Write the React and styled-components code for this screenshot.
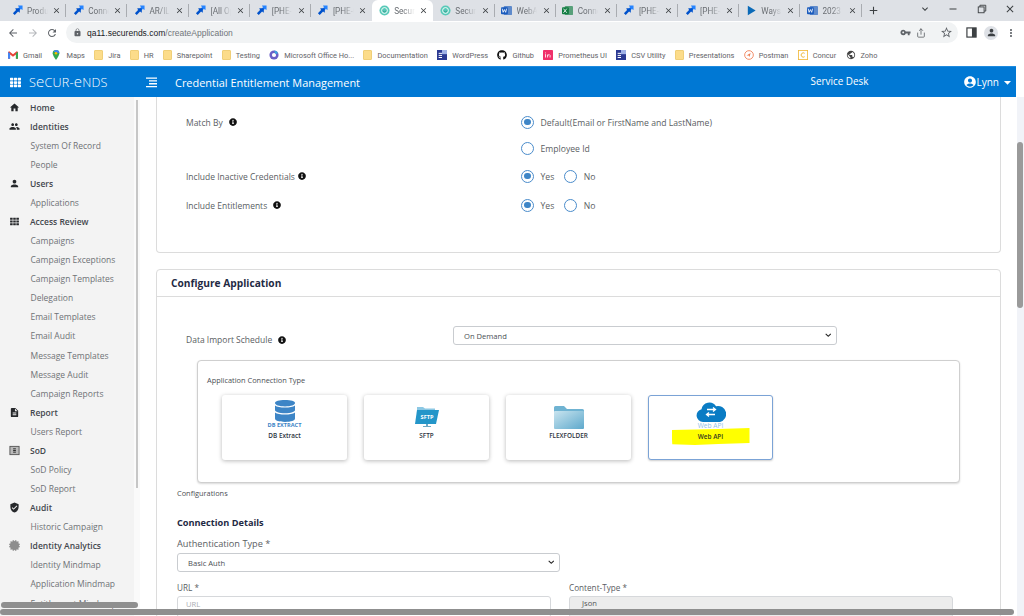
import React from "react";
import styled, { createGlobalStyle } from "styled-components";
import {
  MdArrowBack, MdArrowForward, MdRefresh, MdLock, MdVpnKey, MdStarBorder, MdMoreVert, MdClose, MdAdd,
  MdExpandMore, MdRemove, MdPerson, MdHome, MdPeople, MdDescription, MdVerifiedUser, MdPublic, MdArrowDropDown, MdAccountCircle,
} from "react-icons/md";
import { FaTh, FaInfoCircle, FaGithub, FaCertificate, FaChevronDown } from "react-icons/fa";
import { Share } from "lucide-react";

const Global = createGlobalStyle`
  html, body { margin: 0; padding: 0; background: #fff; overflow: hidden; }
  * { box-sizing: border-box; }
  body { font-family: "Open Sans", "Liberation Sans", sans-serif; }
`;

const Frame = styled.div`
  position: relative; width: 1024px; height: 616px; overflow: hidden;
  display: flex; flex-direction: column; background: #fff;
`;

/* Browser tab strip */
const TabStrip = styled.div`
  height: 21px; flex: none; background: #dee1e6; display: flex; align-items: stretch; padding-left: 5px;
  font-family: Roboto, "Liberation Sans", Arial, sans-serif;
`;
const Tab = styled.div`
  width: 61.2px; flex: none; display: flex; align-items: center; padding: 0 5px 0 6.5px; gap: 4.5px; position: relative;
  background: ${p => (p.$active ? "#fff" : "transparent")};
  border-radius: 6px 6px 0 0;
  color: #6a6e73; font-size: 8.2px;
  &::after {
    content: ""; display: ${p => (p.$sep ? "block" : "none")};
    position: absolute; right: 0; top: 4px; bottom: 4px; width: 1px; background: #a9acb1;
  }
`;
const TabGroup = styled.div`
  display: flex; align-items: stretch; height: 21px;
`;
const TabInner = styled.span`
  flex: 1; white-space: nowrap; min-width: 0;
  -webkit-mask-image: linear-gradient(to right, #000 45%, transparent 100%);
  mask-image: linear-gradient(to right, #000 45%, transparent 100%);
`;
const TabClose = styled(MdClose)`
  width: 9px; height: 9px; color: #3c4043; flex: none;
`;
const NewTab = styled(MdAdd)`
  width: 13px; height: 13px; color: #3c4043; margin: 4px 0 0 5px; flex: none;
`;
const WindowControls = styled.div`
  margin-left: auto; display: flex; align-items: center; height: 18px; color: #3c4043;
`;
const WindowBtn = styled.span`
  width: 28.3px; display: flex; justify-content: center; align-items: center;
  svg { width: ${p => p.$s || 11}px; height: ${p => p.$s || 11}px; }
`;

/* Address row */
const AddressRow = styled.div`
  height: 23px; flex: none; background: #fff; display: flex; align-items: center; color: #5f6368;
`;
const NavBtns = styled.div`
  width: 66px; flex: none; display: flex; align-items: center; padding-left: 7px; gap: 7.5px;
  svg { width: 12px; height: 12px; }
`;
const Pill = styled.div`
  width: 892px; height: 21px; border-radius: 11px; background: #f1f3f4; display: flex; align-items: center;
  padding: 0 5px 0 7px; font-family: "Liberation Sans", Arial, sans-serif; font-size: 8.5px;
`;
const LockGlyph = styled(MdLock)`width: 9px; height: 9px; margin-right: 5px; color: #5f6368;`;
const UrlHost = styled.span`color: #202124;`;
const UrlPath = styled.span`color: #70757a;`;
const PillEnd = styled.div`
  margin-left: auto; display: flex; align-items: center; gap: 5px; color: #5f6368;
`;
const StarGlyph = styled(MdStarBorder)`width: 13px; height: 13px; margin-left: 9px;`;
const RightTools = styled.div`
  flex: 1; display: flex; align-items: center; justify-content: space-between; padding: 0 7px 0 8px; color: #5f6368;
`;
const AvatarDot = styled.span`
  width: 14px; height: 14px; border-radius: 50%; background: #dee1e6; display: flex; align-items: center; justify-content: center; color: #3c4043;
`;

/* Bookmarks */
const BookmarksBar = styled.div`
  height: 22px; flex: none; background: #fff; display: flex; align-items: center; padding-left: 8px;
  font-family: Roboto, "Liberation Sans", Arial, sans-serif; font-size: 7.4px; color: #5f6368; gap: 9.3px;
`;
const Bookmark = styled.span`
  display: inline-flex; align-items: center; gap: 5px; white-space: nowrap;
  svg { width: 10px; height: 10px; flex: none; }
`;
const FolderGlyph = styled.i`
  display: block; width: 9px; height: 10px; background: #fcdc8a; border: 1px solid #f0cf78; border-radius: 1px; flex: none;
`;

/* App header */
const AppHeader = styled.header`
  height: 31px; flex: none; width: 1016px; background: #0078d4; color: #fff; display: flex; align-items: center;
  padding-left: 10px; border-top: 1px solid #1d8be0;
`;
const AppGrid = styled(FaTh)`width: 11px; height: 11px; flex: none;`;
const Logo = styled.div`
  width: 117px; margin-left: 8px; flex: none; font-weight: 300; font-size: 12.6px; letter-spacing: 0.2px; white-space: nowrap; line-height: 1;
  b { font-weight: 300; font-size: 15px; }
`;
const Burger = styled.svg`width: 11px; height: 11px; flex: none; fill: #fff;`;
const AppTitle = styled.div`
  margin-left: 18px; font-size: 10.95px; white-space: nowrap; width: 636px; font-weight: 400;
`;
const ServiceDesk = styled.div`
  width: 152px; font-size: 9.9px; white-space: nowrap; margin-top: -3px;
`;
const UserMenu = styled.div`
  display: flex; align-items: center; font-size: 10px; white-space: nowrap;
  svg:first-child { width: 14px; height: 14px; }
  svg:last-child { width: 17px; height: 17px; }
`;

/* Body */
const Body = styled.div`
  flex: 1; min-height: 0; display: flex; overflow: hidden;
`;
const Sidebar = styled.nav`
  width: 140px; flex: none; height: 100%; background: linear-gradient(to right, #f3f3f3 134px, #fafafa 134px);
  padding-top: 0.5px; overflow: hidden; position: relative;
`;
const NavRow = styled.div`
  height: 19.08px; display: flex; align-items: center; padding-left: ${p => (p.$head ? "9px" : "30.5px")};
  font-size: 8.5px; white-space: nowrap; color: ${p => (p.$head ? "#43474d" : "#6f7276")}; font-weight: ${p => (p.$head ? 600 : 400)};
`;
const NavIcon = styled.span`
  width: 11px; height: 11px; margin-right: 10px; display: flex; align-items: center; justify-content: center; color: ${p => p.$c || "#26282b"};
  svg { width: 100%; height: 100%; }
`;
const SmallGrid = styled(FaTh)`
  transform: scale(0.8);
`;
const SideThumb = styled.div`
  position: absolute; left: 136px; top: 3px; width: 2px; height: 388px; background: #c6c6c6;
`;

const Main = styled.main`
  width: 877px; flex: none; padding: 0 16px 0 16px; background: #fff; overflow: hidden;
`;
const PageTrack = styled.div`
  flex: 1; background: #f1f3f8;
`;
const Card = styled.section`
  border: 1px solid #dcdcdc; border-radius: ${p => (p.$first ? "0 0 4px 4px" : "4px")};
  border-top-width: ${p => (p.$first ? 0 : 1)}px;
  margin-bottom: 16px; background: #fff;
`;
const FieldsBody = styled.div`
  padding: 17px 0 0 29px; height: 155px;
`;
const FieldRow = styled.div`
  display: grid; grid-template-columns: 335px 1fr; height: ${p => p.$h || 29}px; align-items: start;
`;
const FieldLabel = styled.div`
  display: flex; align-items: center; font-size: 8.5px; color: #5a5e63; height: 16px; white-space: nowrap;
`;
const Info = styled(FaInfoCircle)`
  width: 8px; height: 8px; color: #111; margin-left: ${p => p.$gap || 5}px;
`;
const RadioColumn = styled.div`display: flex; flex-direction: column; gap: 10px;`;
const RadioLine = styled.div`display: flex; align-items: center; height: 16px; gap: 7px;`;
const RadioItem = styled.span`
  display: inline-flex; align-items: center; gap: 6.5px; font-size: 8.65px; color: #5a5e63; white-space: nowrap;
  margin-left: ${p => p.$l || 0}px;
`;
const RadioText = styled.span`margin-top: 2px;`;
const RadioDot = styled.span`
  width: 13px; height: 13px; flex: none; border-radius: 50%; border: 1.3px solid #4a8ccb; background: #fff; display: flex; align-items: center; justify-content: center;
  &::after { content: ""; width: 6.5px; height: 6.5px; border-radius: 50%; background: ${p => (p.$on ? "#3f86c7" : "transparent")}; }
`;
const CardHead = styled.div`
  height: 27px; border-bottom: 1px solid #dcdcdc; display: flex; align-items: center; padding-left: 14px;
  font-size: 10.2px; font-weight: 700; color: #1f2a44;
`;
const ScheduleRow = styled.div`
  display: flex; align-items: center; height: 19px; margin: 29px 0 0 29px;
`;
const ScheduleLabel = styled(FieldLabel)`width: 267px; margin-top: 8px;`;
const SelectBox = styled.div`
  width: ${p => p.$w}px; height: ${p => p.$h || 19}px; border: 1px solid #c9ccd0; border-radius: 3px; background: #fff; display: flex; align-items: center;
  padding: 0 5px 0 10px; font-size: 7.6px; color: #4b4f55; justify-content: space-between;
  svg { width: 6.5px; height: 6.5px; color: #222; }
`;
const ConnectionBox = styled.div`
  margin: 15px 0 0 40px; width: 763px; height: 123px; border: 1px solid #cfcfcf; border-radius: 4px; box-shadow: 0 1px 2px rgba(0,0,0,.15); padding: 14px 0 0 9px; background: #fff;
`;
const ConnTitle = styled.div`font-size: 7.4px; color: #4c5055; height: 20px; line-height: 10px;`;
const TypeRow = styled.div`display: flex; gap: 17px; padding-left: 15px;`;
const TypeCard = styled.div`
  width: 125px; height: 65px; border-radius: 3px; background: #fff; display: flex; flex-direction: column; align-items: center;
  border: ${p => (p.$sel ? "1px solid #7ba3d6" : "0")}; box-shadow: ${p => (p.$sel ? "0 1px 2px rgba(0,0,0,.2)" : "0 1px 4px rgba(0,0,0,.28)")};
  padding-top: ${p => (p.$sel ? 4 : 5)}px;
`;
const IconSlot = styled.div`
  height: 31px; display: flex; flex-direction: column; align-items: center; justify-content: flex-end; padding-bottom: 2px;
`;
const MiniCaption = styled.div`font-size: 5.6px; line-height: 7px; font-weight: 700; color: ${p => p.$c}; white-space: nowrap;`;
const ApiCaption = styled.div`font-size: 6.6px; line-height: 7px; color: #8fc0e8; white-space: nowrap;`;
const TypeLabel = styled.div`font-size: 6.4px; line-height: 10px; color: #2c3340; font-weight: 600; white-space: nowrap;`;
const Highlight = styled.div`
  width: 78px; height: 17px; margin-top: -3px; background: #ffff00; display: flex; align-items: center; justify-content: center;
  clip-path: polygon(0 12%, 60% 6%, 100% 0, 100% 88%, 60% 94%, 30% 100%, 1% 96%);
  font-size: 6.4px; color: #333a20; font-weight: 600;
`;
const Configurations = styled.div`margin: 5px 0 0 20px; font-size: 7.4px; color: #4c5055; height: 10px; line-height: 10px;`;
const SubHead = styled.div`margin: 18px 0 0 20px; font-size: 9.2px; font-weight: 700; color: #1f2a44; line-height: 13px;`;
const FormLabel = styled.div`margin-left: 20px; font-size: 9.2px; color: #5a5e63; line-height: 14px; margin-top: 8px;`;
const FormSelect = styled(SelectBox)`margin: 2px 0 0 20px;`;
const TwoCols = styled.div`display: grid; grid-template-columns: 392px 385px; margin: 10px 0 0 20px;`;
const SmallLabel = styled.div`font-size: 8.2px; color: #5a5e63; line-height: 12px; margin-bottom: 2px;`;
const Input = styled.div`
  width: ${p => p.$w}px; height: 22px; border: 1px solid #d6d8db; border-radius: 3px; background: ${p => (p.$off ? "#ececec" : "#fff")};
  padding: ${p => (p.$off ? 1 : 2)}px 0 0 ${p => (p.$off ? 12 : 8)}px; font-size: 7.6px; color: ${p => (p.$off ? "#555" : "#a9adb3")};
`;

/* Overlay scrollbars */
const HBar = styled.div`
  position: absolute; left: ${p => p.$l}px; top: ${p => p.$t}px; width: ${p => p.$w}px; height: ${p => p.$h}px; background: #8f8f8f; border-radius: 3px;
`;
const VBar = styled.div`
  position: absolute; left: 1017px; top: 142px; width: 6px; height: 166px; background: #9a9a9a; border-radius: 3px;
`;

const Jira = () => (
  <svg width="11" height="11" viewBox="0 0 12 12" style={{ flex: "none" }}>
    <path d="M6.500 .5h5v5L9.700 4.300 7.800 6 6 4.400l1.600-2z" fill="#2684ff" />
    <path d="M3.500 3.500h5v5L6.600 7.200 3 11 1 9l3.400-3.600z" fill="#0052cc" />
  </svg>
);
const Sec = () => (
  <svg width="11" height="11" viewBox="0 0 12 12" style={{ flex: "none" }}>
    <circle cx="6" cy="6" r="5.500" fill="#57c9b8" />
    <circle cx="6" cy="6" r="3.200" fill="none" stroke="#fff" strokeWidth="1" />
    <path d="M4.300 6.700q1.700 1.400 3.400 0" fill="none" stroke="#2b8f83" strokeWidth=".7" />
  </svg>
);
const Office = ({ c, l }) => (
  <svg width="11" height="11" viewBox="0 0 12 12" style={{ flex: "none" }}>
    <rect x="3" y="1" width="9" height="10" rx="1" fill={c} opacity=".65" />
    <rect x="0" y="2.500" width="7.500" height="7.500" rx="1" fill={c} />
    <path d={l === "W" ? "M1.300 4l1 4 1.400-3 1.400 3 1-4" : "M1.600 4l3.600 4.500M5.200 4L1.600 8.500"} fill="none" stroke="#fff" strokeWidth=".9" />
  </svg>
);
const Play = () => (
  <svg width="11" height="11" viewBox="0 0 12 12" style={{ flex: "none" }}>
    <path d="M2 .8l8.500 5.200L2 11.200z" fill="#0a6ab8" />
  </svg>
);

const tabs = [
  [<Jira />, "Produc", 1], [<Jira />, "Conne", 1], [<Jira />, "AR/ILM", 1], [<Jira />, "[All Op", 1],
  [<Jira />, "[PHE-6", 1], [<Jira />, "[PHE-6", 0], [<Sec />, "SecurE", 0, true], [<Sec />, "SecurE", 1],
  [<Office c="#185abd" l="W" />, "WebAI", 1], [<Office c="#107c41" l="X" />, "Conne", 1], [<Jira />, "[PHE-6", 1], [<Jira />, "[PHE-8", 1],
  [<Play />, "Ways t", 1], [<Office c="#185abd" l="W" />, "2023 R", 1],
];

const GmailIcon = () => (
  <svg viewBox="0 0 12 10"><path d="M0 1.500v8h2.500V4.500L6 7l3.500-2.500v5H12v-8L10.500.5 6 4 1.500.5z" fill="#ea4335" /><path d="M0 1.500v8h2.500V3z" fill="#4285f4" /><path d="M12 1.500v8H9.500V3z" fill="#34a853" /></svg>
);
const MapsIcon = () => (
  <svg viewBox="0 0 10 12"><path d="M5 0a4 4 0 0 1 4 4c0 3-4 8-4 8S1 7 1 4a4 4 0 0 1 4-4z" fill="#34a853" /><path d="M5 0a4 4 0 0 1 4 4L2 2a4 4 0 0 1 3-2z" fill="#4285f4" /><circle cx="5" cy="4" r="1.500" fill="#fbbc04" /></svg>
);
const OfficeHome = () => (
  <svg viewBox="0 0 12 12"><circle cx="6" cy="6" r="5.500" fill="#6a5fc7" /><circle cx="6" cy="6" r="2.500" fill="#fff" /><path d="M6 .5a5.500 5.500 0 0 1 5 3L8 5z" fill="#3ea6e0" /></svg>
);
const WordPressIcon = () => (
  <svg viewBox="0 0 12 12"><rect width="12" height="12" fill="#2b3a93" /><rect x="6" y="0" width="6" height="5" fill="#9fb1e6" /><path d="M2 4h4M2 6.500h4M2 9h4" stroke="#fff" strokeWidth="1.200" /></svg>
);
const InIcon = () => (
  <svg viewBox="0 0 12 12"><rect width="12" height="12" rx="1" fill="#f0306a" /><path d="M3 5v4M3 3v1M5.500 9V5.500M5.500 6.500q2.500-2 3 0V9" stroke="#fff" fill="none" strokeWidth="1" /></svg>
);
const PostmanIcon = () => (
  <svg viewBox="0 0 12 12"><circle cx="6" cy="6" r="5.200" fill="#fff" stroke="#ef7a4e" strokeWidth="1" /><path d="M3 6.500L8 3.500 6.500 8.500 5.600 6.600z" fill="#ef7a4e" /></svg>
);
const ConcurIcon = () => (
  <svg viewBox="0 0 12 12"><rect x=".5" y=".5" width="11" height="11" fill="#fff" stroke="#f1b93a" /><path d="M8 4a2.600 2.600 0 1 0 0 4" stroke="#f1b93a" fill="none" strokeWidth="1.200" /></svg>
);
const Folder = () => <FolderGlyph />;

const bookmarks = [
  [<GmailIcon />, "Gmail"], [<MapsIcon />, "Maps"], [<Folder />, "Jira"], [<Folder />, "HR"], [<Folder />, "Sharepoint"], [<Folder />, "Testing"],
  [<OfficeHome />, "Microsoft Office Ho..."], [<Folder />, "Documentation"], [<WordPressIcon />, "WordPress"], [<FaGithub color="#111" />, "Github"],
  [<InIcon />, "Prometheus UI"], [<WordPressIcon />, "CSV Utility"], [<Folder />, "Presentations"], [<PostmanIcon />, "Postman"], [<ConcurIcon />, "Concur"],
  [<MdPublic color="#444" />, "Zoho"],
];

const SodIcon = () => (
  <svg viewBox="0 0 12 12"><rect x="1" y="1.500" width="10" height="9" fill="#b9b9b9" stroke="#555" /><path d="M4.500 4.200h3M4.500 6h3M4.500 7.800h3" stroke="#222" strokeWidth="1" /></svg>
);

const nav = [
  ["Home", <MdHome />], ["Identities", <MdPeople />], ["System Of Record"], ["People"], ["Users", <MdPerson />], ["Applications"],
  ["Access Review", <SmallGrid />], ["Campaigns"], ["Campaign Exceptions"], ["Campaign Templates"], ["Delegation"], ["Email Templates"], ["Email Audit"],
  ["Message Templates"], ["Message Audit"], ["Campaign Reports"], ["Report", <MdDescription />], ["Users Report"], ["SoD", <SodIcon />], ["SoD Policy"], ["SoD Report"],
  ["Audit", <MdVerifiedUser />], ["Historic Campaign"], ["Identity Analytics", <FaCertificate />, "#8d8d8d"], ["Identity Mindmap"], ["Application Mindmap"], ["Entitlement Mindmap"],
];

const DbIcon = () => (
  <svg width="20" height="22" viewBox="0 0 20 22">
    <g fill="#3d85c6">
      <path d="M0 3c0-2 4-3 10-3s10 1 10 3-4 3.400-10 3.400S0 5 0 3z" />
      <path d="M0 5.600c2 1.600 5.500 2 10 2s8-.4 10-2V10c0 1.800-4 3.200-10 3.200S0 11.800 0 10z" />
      <path d="M0 12.400c2 1.600 5.500 2 10 2s8-.4 10-2v6.200C20 20.600 16 22 10 22S0 20.600 0 18.600z" />
    </g>
  </svg>
);
const SftpIcon = () => (
  <svg width="24" height="24" viewBox="0 0 24 24">
    <path d="M2 2h6l2 1.500h10V7H2z" fill="#8cc8e4" />
    <path d="M2 5h22l-3 14H0z" fill="#2496c9" />
    <path d="M11 19h2v2h3v1H8v-1h3z" fill="#6fa9c4" />
    <text x="12" y="14" textAnchor="middle" fontSize="5.600" fontWeight="700" fill="#fff" fontFamily="Open Sans, sans-serif">SFTP</text>
  </svg>
);
const FlexIcon = () => (
  <svg width="30" height="23" viewBox="0 0 30 23">
    <defs>
      <linearGradient id="fg" x1="0" y1="0" x2="1" y2="1"><stop offset="0" stopColor="#c9e4ef" /><stop offset="1" stopColor="#5ea9cc" /></linearGradient>
    </defs>
    <path d="M0 1.500Q0 0 1.500 0H10l3 3h15.500Q30 3 30 4.500V6H0z" fill="#6fb3d2" />
    <rect y="5" width="30" height="18" rx="1" fill="url(#fg)" />
  </svg>
);
const CloudIcon = () => (
  <svg width="30" height="20" viewBox="0 0 30 20">
    <path d="M7 20a6.500 6.500 0 0 1-1.500-12.800A8 8 0 0 1 20 4.200 6 6 0 0 1 24 20z" fill="#0a7cc4" />
    <path d="M11 7.500h8M17 5.500l2.500 2-2.500 2M19 12.500h-8M13 10.500l-2.500 2 2.500 2" stroke="#fff" strokeWidth="1.300" fill="none" />
  </svg>
);

const PanelIcon = () => (
  <svg width="11" height="11" viewBox="0 0 12 12"><rect x="1" y="1" width="10" height="10" fill="none" stroke="#3c4043" strokeWidth="1.300" /><rect x="6.500" y="1" width="4.500" height="10" fill="#3c4043" /></svg>
);
const RestoreIcon = () => (
  <svg viewBox="0 0 12 12"><rect x="1.500" y="3.500" width="7" height="7" fill="none" stroke="#3c4043" strokeWidth="1.100" /><path d="M3.500 3.500v-2h7v7h-2" fill="none" stroke="#3c4043" strokeWidth="1.100" /></svg>
);

const YesNo = () => (
  <RadioLine>
    <RadioItem><RadioDot $on /><RadioText>Yes</RadioText></RadioItem>
    <RadioItem $l={3}><RadioDot /><RadioText>No</RadioText></RadioItem>
  </RadioLine>
);

export default function App() {
  return (
    <Frame>
      <Global />
      <TabStrip>
        <TabGroup>
          {tabs.map(([icon, title, sep, active], i) => (
            <Tab key={i} $sep={!!sep && !active} $active={active}>
              {icon}
              <TabInner>{title}</TabInner>
              <TabClose />
            </Tab>
          ))}
        </TabGroup>
        <NewTab />
        <WindowControls>
          <WindowBtn $s={12}><MdExpandMore /></WindowBtn>
          <WindowBtn $s={12}><MdRemove /></WindowBtn>
          <WindowBtn $s={10}><RestoreIcon /></WindowBtn>
          <WindowBtn $s={12}><MdClose /></WindowBtn>
        </WindowControls>
      </TabStrip>

      <AddressRow>
        <NavBtns>
          <MdArrowBack />
          <MdArrowForward color="#b5b8bc" />
          <MdRefresh />
        </NavBtns>
        <Pill>
          <LockGlyph />
          <UrlHost>qa11.securends.com</UrlHost>
          <UrlPath>/createApplication</UrlPath>
          <PillEnd>
            <MdVpnKey size={11} />
            <Share size={10} />
            <StarGlyph />
          </PillEnd>
        </Pill>
        <RightTools>
          <PanelIcon />
          <AvatarDot><MdPerson size={11} /></AvatarDot>
          <MdMoreVert size={12} />
        </RightTools>
      </AddressRow>

      <BookmarksBar>
        {bookmarks.map(([icon, label], i) => (
          <Bookmark key={i}>{icon}{label}</Bookmark>
        ))}
      </BookmarksBar>

      <AppHeader>
        <AppGrid />
        <Logo>S<b>e</b>CUR-<b>e</b>NDS</Logo>
        <Burger viewBox="0 0 11 11">
          <path d="M0 .5h11v1.300H0zM3 3.300h8v1.300H3zM3 6.100h8v1.300H3zM0 8.900h11v1.300H0z" />
        </Burger>
        <AppTitle>Credential Entitlement Management</AppTitle>
        <ServiceDesk>Service Desk</ServiceDesk>
        <UserMenu>
          <MdAccountCircle />
          Lynn
          <MdArrowDropDown />
        </UserMenu>
      </AppHeader>

      <Body>
        <Sidebar>
          {nav.map(([label, icon, c], i) => (
            <NavRow key={i} $head={!!icon}>
              {icon && <NavIcon $c={c}>{icon}</NavIcon>}
              {label}
            </NavRow>
          ))}
          <SideThumb />
        </Sidebar>

        <Main>
          <Card $first>
            <FieldsBody>
              <FieldRow $h={54}>
                <FieldLabel>Match By<Info $gap={6} /></FieldLabel>
                <RadioColumn>
                  <RadioLine><RadioItem><RadioDot $on /><RadioText>Default(Email or FirstName and LastName)</RadioText></RadioItem></RadioLine>
                  <RadioLine><RadioItem><RadioDot /><RadioText>Employee Id</RadioText></RadioItem></RadioLine>
                </RadioColumn>
              </FieldRow>
              <FieldRow>
                <FieldLabel>Include Inactive Credentials<Info $gap={3} /></FieldLabel>
                <YesNo />
              </FieldRow>
              <FieldRow>
                <FieldLabel>Include Entitlements<Info $gap={6} /></FieldLabel>
                <YesNo />
              </FieldRow>
            </FieldsBody>
          </Card>

          <Card>
            <CardHead>Configure Application</CardHead>
            <ScheduleRow>
              <ScheduleLabel>Data Import Schedule<Info $gap={6} /></ScheduleLabel>
              <SelectBox $w={384}>On Demand<FaChevronDown /></SelectBox>
            </ScheduleRow>
            <ConnectionBox>
              <ConnTitle>Application Connection Type</ConnTitle>
              <TypeRow>
                <TypeCard>
                  <IconSlot><DbIcon /><MiniCaption $c="#3d85c6">DB EXTRACT</MiniCaption></IconSlot>
                  <TypeLabel>DB Extract</TypeLabel>
                </TypeCard>
                <TypeCard>
                  <IconSlot><SftpIcon /></IconSlot>
                  <TypeLabel>SFTP</TypeLabel>
                </TypeCard>
                <TypeCard>
                  <IconSlot><FlexIcon /></IconSlot>
                  <TypeLabel>FLEXFOLDER</TypeLabel>
                </TypeCard>
                <TypeCard $sel>
                  <IconSlot><CloudIcon /><ApiCaption>Web API</ApiCaption></IconSlot>
                  <Highlight>Web API</Highlight>
                </TypeCard>
              </TypeRow>
            </ConnectionBox>
            <Configurations>Configurations</Configurations>
            <SubHead>Connection Details</SubHead>
            <FormLabel>Authentication Type *</FormLabel>
            <FormSelect $w={383}>Basic Auth<FaChevronDown /></FormSelect>
            <TwoCols>
              <div>
                <SmallLabel>URL *</SmallLabel>
                <Input $w={374}>URL</Input>
              </div>
              <div>
                <SmallLabel>Content-Type *</SmallLabel>
                <Input $w={384} $off>Json</Input>
              </div>
            </TwoCols>
          </Card>
        </Main>
        <PageTrack />
      </Body>

      <VBar />
      <HBar $l={1} $t={602} $w={137} $h={6} />
      <HBar $l={0} $t={609} $w={1014} $h={6} />
    </Frame>
  );
}
